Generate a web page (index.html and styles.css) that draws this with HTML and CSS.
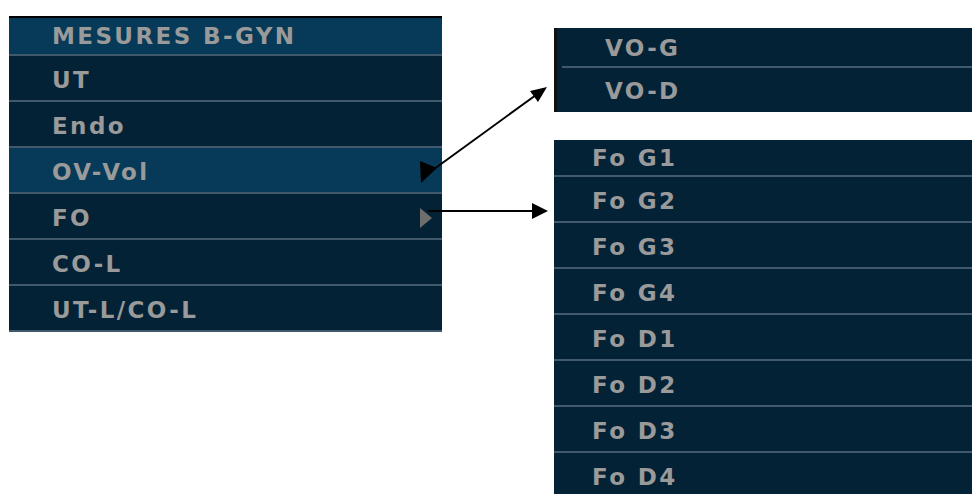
FILE: index.html
```html
<!DOCTYPE html>
<html lang="fr">
<head>
  <meta charset="UTF-8" />
  <title>Mesures B-GYN</title>
  <link rel="stylesheet" href="styles.css">
</head>
<body>
  <div class="stage">
    <ul class="menu main">
      <li class="row head">MESURES B-GYN</li>
      <li class="row">UT</li>
      <li class="row">Endo</li>
      <li class="row active">OV-Vol</li>
      <li class="row sub">FO</li>
      <li class="row">CO-L</li>
      <li class="row">UT-L/CO-L</li>
    </ul>

    <div class="side">
      <ul class="menu vo">
        <li class="row">VO-G</li>
        <li class="row">VO-D</li>
      </ul>
      <ul class="menu fo">
        <li class="row first">Fo G1</li>
        <li class="row">Fo G2</li>
        <li class="row">Fo G3</li>
        <li class="row">Fo G4</li>
        <li class="row">Fo D1</li>
        <li class="row">Fo D2</li>
        <li class="row">Fo D3</li>
        <li class="row">Fo D4</li>
      </ul>
    </div>
  </div>

  <!-- callout arrows -->
  <svg class="arrows" width="972" height="494" viewBox="0 0 972 494">
    <polygon points="420,208 420,228 432,218" fill="#6e6e6e" />
    <polygon points="420,161 421,183 437,168" fill="#000" />
    <line x1="430" y1="172" x2="536" y2="95" stroke="#000" stroke-width="2" />
    <polygon points="547,87 530,91 538,102" fill="#000" />
    <line x1="428" y1="211" x2="536" y2="211" stroke="#000" stroke-width="2" />
    <polygon points="548,211 532,203 532,219" fill="#000" />
  </svg>
</body>
</html>
```

FILE: styles.css
```css
:root {
  --row-bg: #032236;
  --row-hi: #063a58;
  --sep: #41596b;
  --text: #9a9a9a;
}

html, body {
  margin: 0;
  height: 494px;
  overflow: hidden;
  background: #ffffff;
}

.stage {
  display: flex;
  align-items: flex-start;
  padding-left: 9px;
}

.menu {
  list-style: none;
  margin: 0;
  padding: 0;
  background: var(--row-bg);
}

.row {
  height: 44px;
  box-sizing: border-box;
  padding-top: 3px;
  border-bottom: 2px solid var(--sep);
  display: flex;
  align-items: center;
  color: var(--text);
  font-family: "DejaVu Sans", sans-serif;
  font-weight: bold;
  font-size: 23px;
  letter-spacing: 2.4px;
}

.main {
  width: 433px;
  margin-top: 16px;
  border-top: 2px solid #000;
}

.main .row {
  height: 46px;
  padding-left: 43px;
}

.main .head {
  height: 38px;
  padding-top: 0;
  background: var(--row-hi);
}

.main .active {
  background: var(--row-hi);
}

.side {
  margin-left: 112px;
  flex: 1;
}

.vo {
  margin-top: 28px;
  border-left: 3px solid #111;
}

.vo .row {
  height: 40px;
  padding-top: 2px;
  margin-left: 5px;
  padding-left: 43px;
}

.vo .row:last-child {
  border-bottom: none;
  height: 44px;
}

.fo {
  margin-top: 28px;
}

.fo .row {
  height: 46px;
  padding-left: 38px;
}

.fo .first {
  height: 37px;
  padding-top: 0;
}

.arrows {
  position: absolute;
  left: 0;
  top: 0;
  pointer-events: none;
}
```
